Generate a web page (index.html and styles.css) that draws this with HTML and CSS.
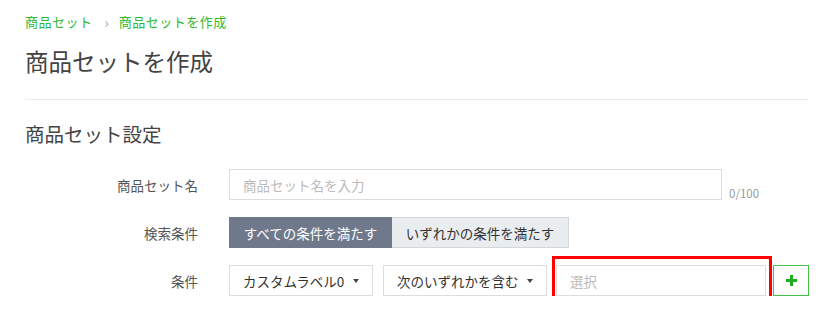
FILE: index.html
```html
<!DOCTYPE html>
<html lang="ja">
<head>
  <meta charset="UTF-8">
  <meta name="viewport" content="width=device-width, initial-scale=1.0">
  <title>商品セットを作成</title>
  <link rel="stylesheet" href="styles.css">
</head>
<body>
  <div class="page">
    <nav class="crumbs">
      <a href="#">商品セット</a>
      <span class="sep">›</span>
      <a href="#">商品セットを作成</a>
    </nav>
    <h1>商品セットを作成</h1>
    <hr>
    <h2>商品セット設定</h2>

    <div class="form">
      <label class="label">商品セット名</label>
      <div class="field">
        <input class="text name" type="text" placeholder="商品セット名を入力">
        <span class="count">0/100</span>
      </div>

      <label class="label">検索条件</label>
      <div class="field">
        <div class="toggle">
          <button class="on">すべての条件を満たす</button>
          <button>いずれかの条件を満たす</button>
        </div>
      </div>

      <label class="label">条件</label>
      <div class="field">
        <button class="select sel-label">カスタムラベル0 <i class="caret"></i></button>
        <button class="select sel-op">次のいずれかを含む <i class="caret"></i></button>
        <div class="mark">
          <input class="text pick" type="text" placeholder="選択">
        </div>
        <button class="add">
          <svg width="11" height="11" viewBox="0 0 11 11"><rect x="4" y="0" width="3" height="11" fill="#1fae1f"/><rect x="0" y="4" width="11" height="3" fill="#1fae1f"/></svg>
        </button>
      </div>
    </div>
  </div>
</body>
</html>
```

FILE: styles.css
```css
body { margin: 0; background: #fff; font-family: "Noto Sans CJK JP", "Noto Sans", sans-serif; color: #333; }
.page { padding: 12px 32px 0 25px; }

.crumbs { font-size: 13px; line-height: 20px; display: flex; align-items: center; }
.crumbs a { color: #2fb92f; text-decoration: none; letter-spacing: 0.5px; }
.crumbs .sep { color: #999; margin: 0 10px 0 12px; font-size: 14px; }

h1 { font-size: 23.5px; font-weight: 400; line-height: 30px; margin: 14px 0 0; color: #444; }
hr { border: 0; border-top: 1px solid #ebebeb; margin: 23px 0 0; }
h2 { font-size: 19.5px; font-weight: 400; line-height: 26px; margin: 21px 0 0; color: #444; }

.form { display: grid; grid-template-columns: 173px 1fr; column-gap: 31px; row-gap: 17px; margin-top: 22px; }
.label { text-align: right; font-size: 13.5px; color: #555; display: flex; align-items: center; justify-content: flex-end; }
.field { display: flex; align-items: center; }

.text { box-sizing: border-box; height: 31px; border: 1px solid #ddd; padding: 0 13px; font-family: inherit; font-size: 13.5px; color: #333; outline: none; }
.text::placeholder { color: #bbb; }
.name { width: 493px; }
.count { align-self: flex-end; margin: 0 0 -1px 7px; font-size: 11.5px; color: #999; }

.toggle { display: flex; }
.toggle button { height: 31px; font-family: inherit; font-size: 13.5px; padding: 0 13px; border: 1px solid #d3d7dc; background: #eaedf0; color: #333; }
.toggle button.on { background: #6f798b; border-color: #6f798b; color: #fff; width: 163px; }
.toggle button + button { border-left: 0; width: 177px; }

.select { box-sizing: border-box; height: 31px; border: 1px solid #ddd; background: #fff; font-family: inherit; font-size: 13.5px; color: #333; padding: 0 13px; display: flex; align-items: center; justify-content: space-between; }
.sel-label { width: 144px; }
.sel-op { width: 164px; margin-left: 10px; }
.caret { display: inline-block; border-top: 4px solid #444; border-left: 3.5px solid transparent; border-right: 3.5px solid transparent; margin-left: 6px; }

/* red highlight frame around the value picker */
.mark { border: 3px solid #f00; padding: 6px 3px 10px 1px; margin: -9px -6px -13px 5px; }
.pick { width: 210px; display: block; }

.add { box-sizing: border-box; width: 36px; height: 31px; margin-left: 7px; border: 1px solid #46c246; background: #fff; display: flex; align-items: center; justify-content: center; padding: 0; }
.add svg { display: block; }
```
